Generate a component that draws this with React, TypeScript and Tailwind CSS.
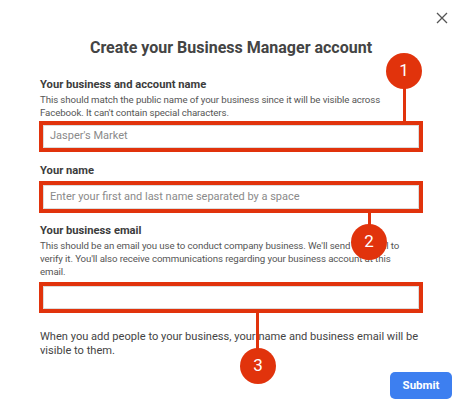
import React from "react";

const Badge = ({ n, cls }: { n: string; cls: string }) => (
  <div
    className={`absolute w-[36px] h-[36px] rounded-full bg-[#e1330c] text-white text-[17px] flex items-center justify-center ${cls}`}
  >
    {n}
  </div>
);

export default function App() {
  return (
    <div
      className="relative w-[462px] h-[405px] bg-white overflow-hidden"
      style={{ fontFamily: "Roboto, 'Liberation Sans', sans-serif" }}
    >
      <div className="h-[37px] flex justify-end pr-[14px] pt-[12px]">
        <svg width="12" height="12" viewBox="0 0 12 12">
          <path d="M1 1 L11 11 M11 1 L1 11" stroke="#555" strokeWidth="1.3" />
        </svg>
      </div>
      <h1 className="text-center text-[16px] leading-[22px] font-bold text-[#444]">
        Create your Business Manager account
      </h1>
      <div className="px-[39px]">
        <div className="mt-[18px] pl-[1px] text-[11.2px] leading-[16px] font-bold text-[#3c3c3c]">
          Your business and account name
        </div>
        <div className="pl-[1px] max-w-[352px] text-[9.7px] tracking-[-0.1px] leading-[13px] text-[#555]">
          This should match the public name of your business since it will be visible across
          Facebook. It can't contain special characters.
        </div>
        <div className="mt-[2px] h-[31px] border-4 border-[#e1330c]">
          <div className="h-full border border-[#dcdcdc] flex items-center pl-[6px] text-[11px] text-[#8a8a8a]">
            Jasper's Market
          </div>
        </div>
        <div className="mt-[11px] pl-[1px] text-[11.2px] leading-[16px] font-bold text-[#3c3c3c]">
          Your name
        </div>
        <div className="mt-[2px] h-[32px] border-4 border-[#e1330c]">
          <div className="h-full border border-[#dcdcdc] flex items-center pl-[6px] text-[11px] text-[#8a8a8a]">
            Enter your first and last name separated by a space
          </div>
        </div>
        <div className="mt-[10px] pl-[1px] text-[11.2px] leading-[16px] font-bold text-[#3c3c3c]">
          Your business email
        </div>
        <div className="pl-[1px] max-w-[368px] text-[9.7px] tracking-[-0.1px] leading-[13px] text-[#555]">
          This should be an email you use to conduct company business. We'll send an email to
          verify it. You'll also receive communications regarding your business account at this
          email.
        </div>
        <div className="mt-[4px] h-[31px] border-4 border-[#e1330c]">
          <div className="h-full border border-[#dcdcdc]" />
        </div>
        <div className="mt-[17px] pl-[1px] text-[11.1px] leading-[14px] text-[#444]">
          When you add people to your business, your name and business email will be visible to
          them.
        </div>
      </div>
      <div className="mt-[14px] flex justify-end pr-[10px]">
        <button className="w-[62px] h-[27px] rounded-[5px] bg-[#3d7ff0] text-white text-[11.5px] font-bold">
          Submit
        </button>
      </div>

      <div className="absolute left-[403px] top-[88px] w-[3px] h-[34px] bg-[#e1330c]" />
      <Badge n="1" cls="left-[386px] top-[53px]" />
      <div className="absolute left-[368px] top-[212px] w-[3px] h-[14px] bg-[#e1330c]" />
      <Badge n="2" cls="left-[351px] top-[224px]" />
      <div className="absolute left-[256px] top-[312px] w-[3px] h-[38px] bg-[#e1330c]" />
      <Badge n="3" cls="left-[240px] top-[348px]" />
    </div>
  );
}
